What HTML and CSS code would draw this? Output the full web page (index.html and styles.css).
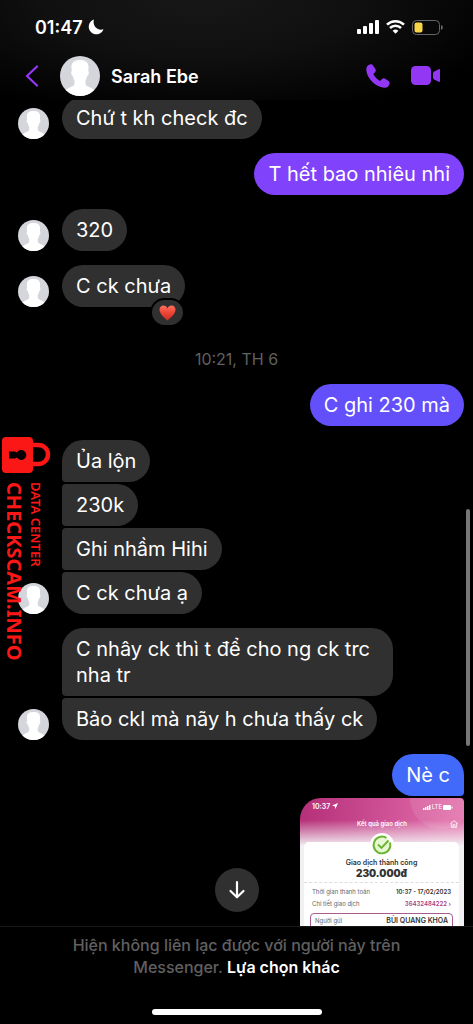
FILE: index.html
```html
<!DOCTYPE html>
<html lang="vi">
<head>
<meta charset="utf-8">
<meta name="viewport" content="width=device-width, initial-scale=1">
<title>Sarah Ebe</title>
<link rel="stylesheet" href="styles.css">
</head>
<body>
<svg class="defs" aria-hidden="true">
  <symbol id="person" viewBox="0 0 40 40">
    <circle cx="20" cy="20" r="20" fill="#d5d6dc"/>
    <path fill="#fff" d="M20 4C14 4 11 6.500 11.500 12.500L11.800 15C10.500 15.500 11.200 19.500 12.800 20C13.100 22 13.700 23.300 14.500 24.200V28C13.500 31 9 31 5.800 34.100A20 20 0 0 0 34.200 34.100C31 31 26.500 31 25.500 28V24.200C26.300 23.300 26.900 22 27.200 20C28.800 19.500 29.500 15.500 28.200 15L28.500 12.500C29 6.500 26 4 20 4z"/>
  </symbol>
</svg>
<header class="top">
  <div class="status">
    <div class="clock"><span>01:47</span>
      <svg width="16" height="16" viewBox="0 0 16 16"><path fill="#fff" d="M6 .5A7.600 7.600 0 1 0 15.500 10.300C9.500 12.500 4 6.500 6 .5z"/></svg>
    </div>
    <div class="signals">
      <svg width="22" height="14" viewBox="0 0 22 14" fill="#fff"><rect y="9" width="4" height="5" rx="1"/><rect x="6" y="6" width="4" height="8" rx="1"/><rect x="12" y="3" width="4" height="11" rx="1"/><rect x="18" width="4" height="14" rx="1"/></svg>
      <svg width="19" height="14" viewBox="0 0 19 14" fill="none" stroke="#fff" stroke-width="2.500"><path d="M1 4.700a12.200 12.200 0 0 1 17 0M4 8a8 8 0 0 1 11 0"/><path d="M9.500 13.700 6.600 10.800a4.200 4.200 0 0 1 5.800 0z" fill="#fff" stroke="none"/></svg>
      <svg width="31" height="15" viewBox="0 0 31 15"><rect x=".5" y=".5" width="27" height="14" rx="4" fill="none" stroke="#666"/><rect x="2.500" y="2.500" width="8" height="10" rx="2" fill="#f8d548"/><path d="M29 5c2.500 1 2.500 4 0 5z" fill="#666"/></svg>
    </div>
  </div>
  <div class="bar">
    <button class="icon-button back" aria-label="Quay lại"><svg width="14" height="22" viewBox="0 0 14 22"><path d="M12 1.500 2 11l10 9.500" fill="none" stroke="#9437f5" stroke-width="2.300" stroke-linecap="round" stroke-linejoin="round"/></svg></button>
    <svg class="avatar-large"><use href="#person"/></svg>
    <h1 class="name">Sarah Ebe</h1>
    <button class="icon-button call" aria-label="Gọi"><svg width="24" height="24" viewBox="0 0 24 24"><path fill="#9437f5" d="M3.800.6C1.300 1.400.1 3.300.3 6.100.9 14.500 9.500 23.100 17.900 23.700c2.800.2 4.700-1 5.500-3.500.5-1.300.2-2.300-.8-3.100l-3.500-2.400c-1.100-.7-2.200-.6-3.100.3l-1.500 1.400c-.4.4-.8.4-1.300.1-2.200-1.400-4.100-3.400-5.500-5.700-.3-.5-.3-.9.1-1.300L9.200 8c.7-.9.8-2 .2-3.100L7 1.400C6.200.4 5.100.1 3.800.6z"/></svg></button>
    <button class="icon-button" aria-label="Gọi video"><svg width="30" height="20" viewBox="0 0 30 20" fill="#9437f5"><rect width="20" height="19" rx="4.500"/><path d="M22 7.500c0-.7.300-1.300.9-1.700l4.600-2.600c.9-.5 1.500-.1 1.500.8v11c0 .9-.6 1.300-1.500.8l-4.600-2.600c-.6-.4-.9-1-.9-1.700z"/></svg></button>
  </div>
</header>

<main class="chat">
  <div class="row"><svg class="avatar"><use href="#person"/></svg><p class="bubble">Chứ t kh check đc</p></div>
  <div class="row mine"><p class="bubble violet">T hết bao nhiêu nhỉ</p></div>
  <div class="row"><svg class="avatar"><use href="#person"/></svg><p class="bubble">320</p></div>
  <div class="row"><svg class="avatar"><use href="#person"/></svg><p class="bubble">C ck chưa
    <span class="reaction"><svg width="17" height="16" viewBox="0 0 17 16"><defs><linearGradient id="heart" x2="0" y2="1"><stop stop-color="#ff705d"/><stop offset=".5" stop-color="#ed4434"/><stop offset="1" stop-color="#c92c24"/></linearGradient></defs><path fill="url(#heart)" d="M8.500 15.500C5.500 13 .5 9 .5 4.800.5 2.300 2.200.6 4.400.6c1.900 0 3.300 1 4.100 2.800C9.300 1.600 10.700.6 12.600.6c2.200 0 3.900 1.700 3.900 4.200 0 4.200-5 8.200-8 10.700z"/></svg></span></p></div>
  <time class="date">10:21, TH 6</time>
  <div class="row mine"><p class="bubble indigo">C ghi 230 mà</p></div>
  <section class="group">
    <div class="row"><p class="bubble joins">Ủa lộn</p></div>
    <div class="row"><p class="bubble joins">230k</p></div>
    <div class="row"><p class="bubble joins">Ghi nhầm Hihi</p></div>
    <div class="row"><svg class="avatar"><use href="#person"/></svg><p class="bubble last">C ck chưa ạ</p></div>
  </section>
  <section class="group">
    <div class="row"><p class="bubble joins">C nhây ck thì t để cho ng ck trc nha tr</p></div>
    <div class="row"><svg class="avatar"><use href="#person"/></svg><p class="bubble last">Bảo ckl mà nãy h chưa thấy ck</p></div>
  </section>
  <section class="group">
    <div class="row mine"><p class="bubble blue">Nè c</p></div>
    <article class="receipt">
      <div class="receipt-status"><span>10:37 <svg width="6" height="6" viewBox="0 0 6 6"><path fill="#fff" d="M6 0 0 2.600 2.800 3.200 3.400 6z"/></svg></span>
        <span class="receipt-signals"><svg width="8" height="5" viewBox="0 0 8 5" fill="#fff"><path d="M0 3h1.500v2H0zM2 2h1.500v3H2zM4 1h1.500v4H4zM6 0h1.500v5H6z"/></svg><small>LTE</small><svg width="10" height="5" viewBox="0 0 10 5"><rect width="8" height="5" rx="1" fill="#fff"/><path d="M9 1.500v2" stroke="#fff"/></svg></span></div>
      <div class="receipt-title"><span></span><h2>Kết quả giao dịch</h2><svg width="8" height="8" viewBox="0 0 8 8" fill="none" stroke="#fff" stroke-width=".8"><path d="M.5 3.500 4 .7l3.500 2.800M1.300 3v4.300h5.400V3M3 7V4.700h2V7"/></svg></div>
      <div class="receipt-sheet">
        <svg class="tick" width="24" height="24" viewBox="0 0 24 24"><circle cx="12" cy="12" r="12" fill="#fff"/><circle cx="12" cy="12" r="8" fill="#e6f8d2"/><path d="M20 9.500A8.400 8.400 0 1 1 16.500 4.900M8 11.500l3.500 3.500L18.500 7.500" fill="none" stroke="#6cb32f" stroke-width="1.900"/></svg>
        <div class="summary"><p>Giao dịch thành công</p><strong>230.000đ</strong></div>
        <dl class="details">
          <div><dt>Thời gian thanh toán</dt><dd>10:37 - 17/02/2023</dd></div>
          <div><dt>Chi tiết giao dịch</dt><dd class="code">36432484222 ›</dd></div>
          <div class="sender"><dt>Người gửi</dt><dd>BÙI QUANG KHOA</dd></div>
        </dl>
      </div>
    </article>
  </section>
  <button class="jump" aria-label="Xuống cuối"><svg width="18" height="20" viewBox="0 0 18 20"><path d="M9 2v15M2.500 11 9 17.300 15.500 11" fill="none" stroke="#fff" stroke-width="2.200" stroke-linecap="round" stroke-linejoin="round"/></svg></button>
</main>

<footer class="notice">
  <p><span>Hiện không liên lạc được với người này trên Messenger.</span> <a href="#options">Lựa chọn khác</a></p>
  <div class="home-bar"></div>
</footer>

<aside class="watermark">
  <svg width="49" height="36" viewBox="0 0 49 36"><path d="M30 8h6.500a9.500 9.500 0 0 1 0 19H30" fill="none" stroke="#fc1717" stroke-width="4.500"/><rect width="31" height="36" rx="4" fill="#fc1717"/><path d="M7 14.500h6l2 1a5 5 0 1 1 0 5l-2 1H7z" fill="#080000"/></svg>
  <div class="watermark-text"><b>CHECKSCAM.INFO</b><span>DATA CENTER</span></div>
</aside>
<div class="scroll-thumb"></div>
</body>
</html>
```
FILE: styles.css
```css
* { box-sizing: border-box; }
body {
  margin: 0;
  height: 100vh;
  display: flex;
  flex-direction: column;
  position: relative;
  overflow: hidden;
  background: #000;
  color: #fff;
  font-family: Inter, "Liberation Sans", sans-serif;
}
h1, h2, p, dl, dd { margin: 0; }
.defs { position: absolute; width: 0; height: 0; }
button { border: 0; padding: 0; cursor: pointer; }

.top {
  position: relative;
  z-index: 2;
  height: 100px;
  flex: none;
  background: radial-gradient(ellipse at 42% 0, #171717, #101010 40%, #000 85%);
}
.status {
  display: flex;
  justify-content: space-between;
  padding: 15px 30px 0 35px;
  height: 52px;
}
.clock, .signals { display: flex; align-items: center; height: 24px; }
.clock { gap: 5px; font-size: 18px; font-weight: 600; }
.signals { gap: 7px; }
.bar { display: flex; align-items: center; height: 48px; padding: 0 32px 0 25px; }
.icon-button { display: flex; background: none; }
.avatar-large { width: 40px; height: 40px; margin: 0 11px 0 21px; }
.name { flex: 1; font-size: 18px; font-weight: 600; }
.call { margin-right: 21px; }

.chat {
  position: relative;
  flex: 1;
  min-height: 0;
  margin-top: -3px;
  overflow: hidden;
  display: flex;
  flex-direction: column;
  gap: 14px;
  padding: 0 9px 0 18px;
}
.group { display: flex; flex-direction: column; gap: 2px; }
.chat > *, .group > * { flex: none; }
.row { display: grid; grid-template-columns: 44px minmax(0, 331px); align-items: end; }
.row > .bubble { grid-column: 2; justify-self: start; }
.mine { display: flex; justify-content: flex-end; }
.avatar { width: 31px; height: 31px; }
.bubble {
  position: relative;
  padding: 8px 14px;
  border-radius: 21px;
  background: #303030;
  font-size: 20px;
  line-height: 26px;
}
.joins { border-radius: 21px 21px 21px 4px; }
.row + .row > .joins,
.last { border-top-left-radius: 4px; }
.violet { background: #8042fa; }
.indigo { background: #6350fa; }
.blue { background: #4169fa; border-bottom-right-radius: 4px; }
.reaction {
  position: absolute;
  right: 0;
  bottom: -20px;
  display: flex;
  align-items: center;
  justify-content: center;
  width: 35px;
  height: 29px;
  border: 2px solid #000;
  border-radius: 15px;
  background: #303030;
}
.date { padding: 28px 9px 0 0; text-align: center; font-size: 16px; line-height: 21px; color: #606060; }

.receipt {
  align-self: flex-end;
  width: 164px;
  height: 190px;
  overflow: hidden;
  border-radius: 21px 4px 21px 21px;
  background:
    radial-gradient(circle at 86% 0, #ffffff18 30px, #fff0 32px),
    linear-gradient(#f3f0f300 22px, #f3f0f3 48px),
    linear-gradient(95deg, #b42f78, #cf5296 50%, #e87bb1);
  font-size: 7px;
  line-height: 10px;
  color: #333;
}
.receipt-status { display: flex; justify-content: space-between; padding: 4px 11px 0 12px; color: #fff; font-weight: 600; }
.receipt-signals { display: flex; align-items: center; gap: 1px; }
.receipt-signals small { font-size: 6px; font-weight: 400; }
.receipt-title { display: grid; grid-template-columns: 1fr auto 1fr; align-items: center; padding: 7px 6px 0; color: #fff; }
.receipt-title h2 { font-size: 6px; font-weight: 600; }
.receipt-title svg { justify-self: end; }
.receipt-sheet { position: relative; margin: 13px 5px 0 4px; border-radius: 5px; background: #fff; }
.tick { position: absolute; top: -9px; left: calc(50% - 12px); }
.summary { padding: 16px 0 4px; text-align: center; border-bottom: 1px dashed #ddd; font-weight: 600; }
.summary strong { display: block; font-size: 10px; line-height: 10px; }
.details { padding: 3px 6px; font-size: 6px; }
.details div { display: flex; justify-content: space-between; padding: 1px 2px; }
.details dt { color: #666; }
.details dd { font-weight: 600; }
.details .code { color: #a83b83; }
.details .sender { margin-top: 3px; padding: 2px 4px 12px; border: 1px solid #a85c90; border-radius: 4px; }
.sender dd { font-size: 7px; }
.jump {
  position: absolute;
  left: calc(50% - 22px);
  bottom: 14px;
  display: flex;
  align-items: center;
  justify-content: center;
  width: 44px;
  height: 44px;
  border-radius: 50%;
  background: #303030;
}

.notice {
  flex: none;
  height: 98px;
  display: flex;
  flex-direction: column;
  justify-content: space-between;
  align-items: center;
  padding: 7px 60px 9px;
  border-top: 1px solid #181818;
  font-size: 16px;
  font-weight: 500;
  line-height: 22px;
  text-align: center;
  color: #606060;
}
.notice a { color: #fff; text-decoration: none; font-weight: 600; }
.home-bar { width: 170px; height: 6px; border-radius: 3px; background: #fff; }

.watermark { position: absolute; z-index: 3; left: 2px; top: 437px; color: #fc1717; }
.watermark svg { display: block; }
.watermark-text { display: flex; flex-direction: column; gap: 6px; writing-mode: vertical-rl; padding: 9px 0 0 2px; font-family: "Noto Sans", "Open Sans", sans-serif; flex-direction: column-reverse; }
.watermark-text b { font-size: 20px; line-height: 20px; font-weight: 700; }
.watermark-text span { font-size: 13px; line-height: 12px; font-weight: 600; }
.scroll-thumb { position: absolute; right: 3px; top: 509px; width: 4px; height: 237px; border-radius: 2px; background: #777; }
```
